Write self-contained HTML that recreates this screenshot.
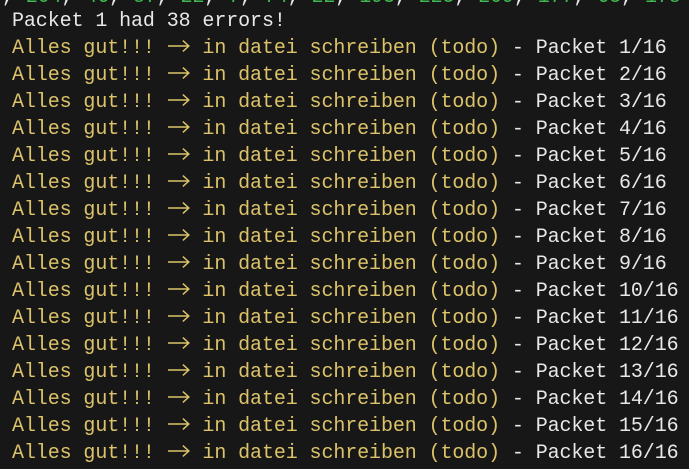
<!DOCTYPE html>
<html><head><meta charset="utf-8"><style>
html,body{margin:0;padding:0;background:#171717;width:689px;height:469px;overflow:hidden}
.t{position:absolute;left:12px;top:-19px;font-family:"Liberation Mono",monospace;font-size:20px;line-height:27px;color:#e8e8e8;white-space:pre;letter-spacing:-0.1px}
.y{color:#dcc36a}.g{color:#3fb950}.w{color:#ececec}
.f{position:relative;top:3px;left:-10px}
.a{display:inline-block;width:23.8px;height:14px;vertical-align:0px}
</style></head><body><div class="t"><span class="f"><span class="w">, </span><span class="g">204</span>, <span class="g">46</span>, <span class="g">87</span>, <span class="g">22</span>, <span class="g">7</span>, <span class="g">74</span>, <span class="g">22</span>, <span class="g">193</span>, <span class="g">225</span>, <span class="g">209</span>, <span class="g">177</span>, <span class="g">65</span>, <span class="g">178</span></span>
Packet 1 had 38 errors!
<span class="y">Alles gut!!! <svg class="a" viewBox="0 0 24 14"><path d="M1 7H22M16 1.5L22 7L16 12.5" fill="none" stroke="#dcc36a" stroke-width="1.5"/></svg> in datei schreiben (todo)</span> - Packet 1/16
<span class="y">Alles gut!!! <svg class="a" viewBox="0 0 24 14"><path d="M1 7H22M16 1.5L22 7L16 12.5" fill="none" stroke="#dcc36a" stroke-width="1.5"/></svg> in datei schreiben (todo)</span> - Packet 2/16
<span class="y">Alles gut!!! <svg class="a" viewBox="0 0 24 14"><path d="M1 7H22M16 1.5L22 7L16 12.5" fill="none" stroke="#dcc36a" stroke-width="1.5"/></svg> in datei schreiben (todo)</span> - Packet 3/16
<span class="y">Alles gut!!! <svg class="a" viewBox="0 0 24 14"><path d="M1 7H22M16 1.5L22 7L16 12.5" fill="none" stroke="#dcc36a" stroke-width="1.5"/></svg> in datei schreiben (todo)</span> - Packet 4/16
<span class="y">Alles gut!!! <svg class="a" viewBox="0 0 24 14"><path d="M1 7H22M16 1.5L22 7L16 12.5" fill="none" stroke="#dcc36a" stroke-width="1.5"/></svg> in datei schreiben (todo)</span> - Packet 5/16
<span class="y">Alles gut!!! <svg class="a" viewBox="0 0 24 14"><path d="M1 7H22M16 1.5L22 7L16 12.5" fill="none" stroke="#dcc36a" stroke-width="1.5"/></svg> in datei schreiben (todo)</span> - Packet 6/16
<span class="y">Alles gut!!! <svg class="a" viewBox="0 0 24 14"><path d="M1 7H22M16 1.5L22 7L16 12.5" fill="none" stroke="#dcc36a" stroke-width="1.5"/></svg> in datei schreiben (todo)</span> - Packet 7/16
<span class="y">Alles gut!!! <svg class="a" viewBox="0 0 24 14"><path d="M1 7H22M16 1.5L22 7L16 12.5" fill="none" stroke="#dcc36a" stroke-width="1.5"/></svg> in datei schreiben (todo)</span> - Packet 8/16
<span class="y">Alles gut!!! <svg class="a" viewBox="0 0 24 14"><path d="M1 7H22M16 1.5L22 7L16 12.5" fill="none" stroke="#dcc36a" stroke-width="1.5"/></svg> in datei schreiben (todo)</span> - Packet 9/16
<span class="y">Alles gut!!! <svg class="a" viewBox="0 0 24 14"><path d="M1 7H22M16 1.5L22 7L16 12.5" fill="none" stroke="#dcc36a" stroke-width="1.5"/></svg> in datei schreiben (todo)</span> - Packet 10/16
<span class="y">Alles gut!!! <svg class="a" viewBox="0 0 24 14"><path d="M1 7H22M16 1.5L22 7L16 12.5" fill="none" stroke="#dcc36a" stroke-width="1.5"/></svg> in datei schreiben (todo)</span> - Packet 11/16
<span class="y">Alles gut!!! <svg class="a" viewBox="0 0 24 14"><path d="M1 7H22M16 1.5L22 7L16 12.5" fill="none" stroke="#dcc36a" stroke-width="1.5"/></svg> in datei schreiben (todo)</span> - Packet 12/16
<span class="y">Alles gut!!! <svg class="a" viewBox="0 0 24 14"><path d="M1 7H22M16 1.5L22 7L16 12.5" fill="none" stroke="#dcc36a" stroke-width="1.5"/></svg> in datei schreiben (todo)</span> - Packet 13/16
<span class="y">Alles gut!!! <svg class="a" viewBox="0 0 24 14"><path d="M1 7H22M16 1.5L22 7L16 12.5" fill="none" stroke="#dcc36a" stroke-width="1.5"/></svg> in datei schreiben (todo)</span> - Packet 14/16
<span class="y">Alles gut!!! <svg class="a" viewBox="0 0 24 14"><path d="M1 7H22M16 1.5L22 7L16 12.5" fill="none" stroke="#dcc36a" stroke-width="1.5"/></svg> in datei schreiben (todo)</span> - Packet 15/16
<span class="y">Alles gut!!! <svg class="a" viewBox="0 0 24 14"><path d="M1 7H22M16 1.5L22 7L16 12.5" fill="none" stroke="#dcc36a" stroke-width="1.5"/></svg> in datei schreiben (todo)</span> - Packet 16/16</div></body></html>
